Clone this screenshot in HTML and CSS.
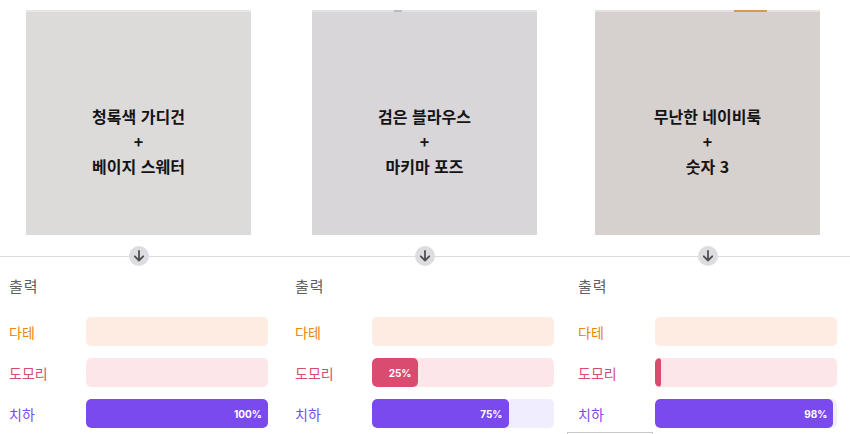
FILE: index.html
```html
<!DOCTYPE html>
<html lang="ko">
<head>
    <meta charset="UTF-8">
    <meta name="viewport" content="width=device-width, initial-scale=1.0">
    <link rel="stylesheet" href="styles.css">
</head>
<body>
    <main class="compare">
        <!-- input looks -->
        <section class="row inputs">
            <div class="cell">
                <div class="swatch swatch-teal">
                    <div class="swatch-edge"></div>
                    <p>청록색 가디건<br>+<br>베이지 스웨터</p>
                </div>
            </div>
            <div class="cell">
                <div class="swatch swatch-black">
                    <div class="swatch-edge edge-grey"></div>
                    <p>검은 블라우스<br>+<br>마키마 포즈</p>
                </div>
            </div>
            <div class="cell">
                <div class="swatch swatch-navy">
                    <div class="swatch-edge edge-tan"></div>
                    <p>무난한 네이비룩<br>+<br>숫자 3</p>
                </div>
            </div>
        </section>

        <!-- arrows on the divider -->
        <div class="row arrows">
            <div class="cell"><div class="arrow-slot"><span class="arrow"><svg viewBox="0 0 20 20" width="20" height="20"><path d="M10 5v9.5M5.8 10.3L10 14.5l4.2-4.2"/></svg></span></div></div>
            <div class="cell"><div class="arrow-slot"><span class="arrow"><svg viewBox="0 0 20 20" width="20" height="20"><path d="M10 5v9.5M5.8 10.3L10 14.5l4.2-4.2"/></svg></span></div></div>
            <div class="cell"><div class="arrow-slot"><span class="arrow"><svg viewBox="0 0 20 20" width="20" height="20"><path d="M10 5v9.5M5.8 10.3L10 14.5l4.2-4.2"/></svg></span></div></div>
        </div>

        <!-- outputs -->
        <section class="row outputs">
            <div class="cell">
                <h3>출력</h3>
                <div class="bars">
                    <div class="bar-row date"><span class="label">다테</span><div class="track"></div></div>
                    <div class="bar-row domori"><span class="label">도모리</span><div class="track"></div></div>
                    <div class="bar-row chiha"><span class="label">치하</span><div class="track"><div class="fill" style="width: 100%">100%</div></div></div>
                </div>
            </div>
            <div class="cell">
                <h3>출력</h3>
                <div class="bars">
                    <div class="bar-row date"><span class="label">다테</span><div class="track"></div></div>
                    <div class="bar-row domori"><span class="label">도모리</span><div class="track"><div class="fill" style="width: 25%">25%</div></div></div>
                    <div class="bar-row chiha"><span class="label">치하</span><div class="track"><div class="fill" style="width: 75%">75%</div></div></div>
                </div>
            </div>
            <div class="cell">
                <h3>출력</h3>
                <div class="bars">
                    <div class="bar-row date"><span class="label">다테</span><div class="track"></div></div>
                    <div class="bar-row domori"><span class="label">도모리</span><div class="track"><div class="fill" style="width: 2%"></div></div></div>
                    <div class="bar-row chiha"><span class="label">치하</span><div class="track"><div class="fill" style="width: 98%">98%</div></div></div>
                </div>
                <div class="next-box"></div>
            </div>
        </section>
    </main>
</body>
</html>
```

FILE: styles.css
```css
body {
    margin: 0;
    background-color: #fff;
    font-family: "Noto Sans CJK KR", "Noto Sans", sans-serif;
    overflow: hidden;
}
.compare {
    padding-top: 10px;
}
.row {
    display: grid;
    grid-template-columns: 286px 283px 1fr;
}
.cell {
    padding-left: 9px;
}

/* input swatches */
.swatch {
    width: 225px;
    height: 225px;
    margin-left: 17px;
    box-sizing: border-box;
}
.swatch p {
    margin: 0;
    padding-top: 92px;
    text-align: center;
    font-size: 16px;
    font-weight: 700;
    line-height: 25px;
    color: #141414;
}
.swatch-edge {
    height: 2px;
    background-color: #e7e6e4;
}
.swatch-teal {
    background-color: #dcdbd9;
}
.swatch-black {
    background-color: #d8d6d9;
}
.swatch-navy {
    background-color: #d6d1ce;
}
.edge-grey {
    background: linear-gradient(to right, #e2e1e3 0 82px, #b9b8bd 82px 90px, #e2e1e3 90px);
}
.edge-tan {
    background: linear-gradient(to right, #e4e1df 0 139px, #d29a5c 139px 172px, #e4e1df 172px);
}

/* divider with arrows */
.arrows {
    margin-top: 11px;
    height: 20px;
    background: linear-gradient(#dcdcdc, #dcdcdc) 0 50% / 100% 1px no-repeat;
}
.arrow-slot {
    width: 225px;
    margin-left: 17px;
    display: flex;
    justify-content: center;
}
.arrow {
    width: 20px;
    height: 20px;
    border-radius: 50%;
    background-color: #dddde1;
    display: flex;
}
.arrow path {
    fill: none;
    stroke: #505050;
    stroke-width: 1.8;
    stroke-linecap: round;
    stroke-linejoin: round;
}

/* outputs */
.outputs h3 {
    margin: 10px 0 0;
    font-size: 15px;
    font-weight: 400;
    line-height: 20px;
    color: #5f5f5f;
    letter-spacing: 1px;
}
.bars {
    margin-top: 21px;
    display: flex;
    flex-direction: column;
    gap: 12px;
}
.bar-row {
    display: grid;
    grid-template-columns: 77px 182px;
    align-items: center;
}
.label {
    font-size: 14px;
    line-height: 20px;
}
.track {
    height: 29px;
    border-radius: 5px;
    overflow: hidden;
    display: flex;
}
.fill {
    border-radius: 5px;
    box-sizing: border-box;
    padding-right: 6px;
    display: flex;
    align-items: center;
    justify-content: flex-end;
    color: #fff;
    font-family: Inter, "Liberation Sans", sans-serif;
    font-size: 10px;
    font-weight: 700;
}
.date .label {
    color: #ec8410;
}
.date .track {
    background-color: #feece3;
}
.domori .label {
    color: #d94c6f;
}
.domori .track {
    background-color: #fde6ea;
}
.domori .fill {
    background-color: #d94c6f;
}
.chiha .label {
    color: #7b4ae8;
}
.chiha .track {
    background-color: #f0edfe;
}
.chiha .fill {
    background-color: #7a4aee;
}
.next-box {
    width: 86px;
    height: 20px;
    margin: 4px 0 0 -11px;
    border-top: 1px solid #c8c8c8;
    border-left: 1px solid #c8c8c8;
    border-right: 1px solid #c8c8c8;
    box-sizing: border-box;
}
```
